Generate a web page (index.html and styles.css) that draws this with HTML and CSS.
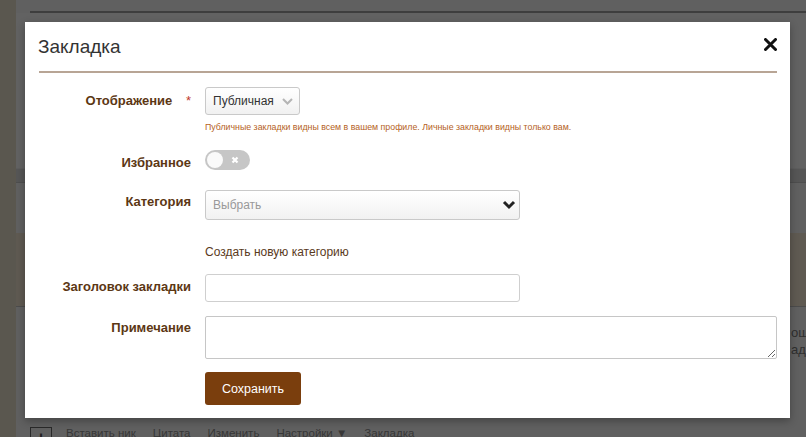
FILE: index.html
```html
<!DOCTYPE html>
<html lang="ru">
<head>
  <meta charset="UTF-8">
  <meta name="viewport" content="width=device-width, initial-scale=1.0">
  <title>Закладка</title>
  <link rel="stylesheet" href="styles.css">
</head>
<body>

  <!-- Page behind the dialog -->
  <div class="page">
    <aside class="side"></aside>
    <main class="content">
      <div class="top-line"></div>
      <div class="filler"></div>
      <div class="band"></div>
      <div class="gap"></div>
      <div class="post-head"></div>
      <div class="post-body">ош<br>ад</div>
      <div class="toolbar">
        <span class="plus">+</span>
        <span>Вставить ник</span>
        <span>Цитата</span>
        <span>Изменить</span>
        <span>Настройки ▼</span>
        <span>Закладка</span>
      </div>
    </main>
  </div>

  <div class="overlay"></div>

  <!-- Bookmark dialog -->
  <div class="modal">
    <div class="modal-header">
      <h2 class="modal-title">Закладка</h2>
      <button class="close-btn" aria-label="Закрыть">
        <svg width="13" height="13" viewBox="0 0 13 13"><path d="M1.5 1.5 L11.5 11.5 M11.5 1.5 L1.5 11.5" stroke="#111" stroke-width="3" stroke-linecap="round"/></svg>
      </button>
    </div>

    <form class="form">
      <div class="row row-privacy">
        <label class="label">Отображение <span class="req">*</span></label>
        <div class="control">
          <div class="select small">
            <span>Публичная</span>
            <svg width="11" height="7" viewBox="0 0 11 7"><path d="M1 1 L5.5 5.5 L10 1" fill="none" stroke="#b5b5b5" stroke-width="2"/></svg>
          </div>
          <p class="hint">Публичные закладки видны всем в вашем профиле. Личные закладки видны только вам.</p>
        </div>
      </div>

      <div class="row row-fav">
        <label class="label">Избранное</label>
        <div class="control">
          <div class="toggle">
            <span class="knob"></span>
            <svg class="toggle-x" width="8" height="8" viewBox="0 0 8 8"><path d="M1.5 1.5 L6.5 6.5 M6.5 1.5 L1.5 6.5" stroke="#fff" stroke-width="2.2"/></svg>
          </div>
        </div>
      </div>

      <div class="row row-cat">
        <label class="label">Категория</label>
        <div class="control">
          <div class="select wide">
            <span class="placeholder">Выбрать</span>
            <svg width="14" height="10" viewBox="0 0 14 10"><path d="M2 2 L7 7 L12 2" fill="none" stroke="#222" stroke-width="3"/></svg>
          </div>
        </div>
      </div>

      <div class="row row-link">
        <span></span>
        <a class="new-cat" href="#">Создать новую категорию</a>
      </div>

      <div class="row row-title">
        <label class="label">Заголовок закладки</label>
        <div class="control">
          <input type="text" class="text-input">
        </div>
      </div>

      <div class="row row-note">
        <label class="label">Примечание</label>
        <div class="control">
          <textarea class="note"></textarea>
        </div>
      </div>

      <div class="row row-submit">
        <span></span>
        <div class="control">
          <button type="button" class="save-btn">Сохранить</button>
        </div>
      </div>
    </form>
  </div>

</body>
</html>
```

FILE: styles.css
```css
body {
  margin: 0;
  width: 806px;
  height: 437px;
  overflow: hidden;
  font-family: "Liberation Sans", Arial, sans-serif;
  position: relative;
}

/* page behind */
.page {
  display: flex;
  height: 437px;
  background-color: #f0f0f0;
}

.side {
  flex-shrink: 0;
  width: 16px;
  background-color: #e1d9c5;
}

.content {
  flex: 1;
  min-width: 0;
  padding-top: 11px;
}

.top-line {
  height: 2px;
  margin-left: 14px;
  background-color: #9b9b9b;
}

.filler {
  height: 155px;
  background-color: #f5f5f5;
}

.band {
  height: 13px;
  background-color: #d8d8d8;
  border-top: 1px solid #e8e8e8;
  border-bottom: 1px solid #c4c4c4;
}

.gap {
  height: 50px;
}

.post-head {
  height: 73px;
  background-color: #ede1cd;
  border-bottom: 1px solid #bdbdbd;
}

.post-body {
  height: 100px;
  padding: 17px 0 0 775px;
  font-size: 13px;
  line-height: 17px;
  color: #777;
  white-space: nowrap;
}

.toolbar {
  display: flex;
  align-items: flex-start;
  gap: 17px;
  padding: 3px 0 0 14px;
  font-size: 11.5px;
  color: #8a8a8a;
}

.toolbar .plus {
  width: 20px;
  height: 20px;
  margin-right: -3px;
  border: 1px solid #666;
  text-align: center;
  font-weight: bold;
  font-size: 18px;
  line-height: 20px;
  color: #555;
}

.overlay {
  position: absolute;
  inset: 0;
  background-color: rgba(0, 0, 0, 0.6);
}

/* dialog */
.modal {
  position: absolute;
  left: 25px;
  top: 22px;
  width: 765px;
  height: 396px;
  background-color: #fff;
  box-shadow: 0 3px 8px rgba(0, 0, 0, 0.3);
}

.modal-header {
  display: flex;
  align-items: center;
  justify-content: space-between;
  height: 49px;
  margin: 0 13px 0 14px;
  border-bottom: 2px solid #b8a595;
}

.modal-title {
  margin: 0 0 0 -1px;
  font-size: 19px;
  font-weight: normal;
  color: #333;
}

.close-btn {
  border: none;
  background: none;
  padding: 0;
  margin-bottom: 4px;
  display: flex;
  cursor: pointer;
}

.form {
  padding: 14px 14px 0 0;
}

.row {
  display: grid;
  grid-template-columns: 166px 1fr;
  column-gap: 14px;
}

.label {
  text-align: right;
  font-size: 13px;
  font-weight: bold;
  line-height: 16px;
  padding-top: 5px;
  color: #5c3714;
  white-space: nowrap;
}

.req {
  color: #c0392b;
  font-weight: normal;
  margin-left: 10px;
}

.row-privacy .label {
  padding-top: 6px;
}

.row-fav {
  margin-top: 17px;
}

.row-cat {
  margin-top: 19px;
}

.row-cat .label {
  padding-top: 4px;
}

.row-link {
  margin-top: 24px;
}

.row-title {
  margin-top: 14px;
}

.row-note {
  margin-top: 14px;
}

.row-note .label {
  padding-top: 4px;
}

.row-submit {
  margin-top: 13px;
}

.select {
  display: flex;
  align-items: center;
  justify-content: space-between;
  box-sizing: border-box;
  border: 1px solid #c9c9c9;
  border-radius: 3px;
  background: linear-gradient(#ffffff, #f1f1f1);
  padding: 0 6px 0 7px;
}

.select.small {
  width: 95px;
  height: 28px;
  font-size: 12px;
  color: #333;
}

.select.wide {
  width: 315px;
  height: 30px;
  padding-right: 3px;
}

.placeholder {
  font-size: 12px;
  color: #999;
}

.hint {
  margin: 6px 0 0;
  font-size: 8.8px;
  line-height: 12px;
  color: #b55f1e;
  white-space: nowrap;
}

.toggle {
  position: relative;
  width: 45px;
  height: 20px;
  border-radius: 10px;
  background-color: #c6c6c6;
}

.knob {
  position: absolute;
  left: 2px;
  top: 2px;
  width: 16px;
  height: 16px;
  border-radius: 50%;
  background-color: #fafafa;
}

.toggle-x {
  position: absolute;
  left: 26px;
  top: 6px;
}

.new-cat {
  font-size: 12px;
  line-height: 16px;
  color: #5a3a1c;
  text-decoration: none;
}

.text-input {
  box-sizing: border-box;
  width: 315px;
  height: 28px;
  border: 1px solid #cfcfcf;
  border-radius: 3px;
  margin: 0;
}

.note {
  display: block;
  box-sizing: border-box;
  width: 572px;
  height: 43px;
  margin: 0;
  border: 1px solid #c6c6c6;
  border-radius: 2px;
  resize: both;
}

.save-btn {
  width: 96px;
  height: 33px;
  border: none;
  border-radius: 3px;
  background-color: #7a3e0d;
  color: #fff;
  font-size: 12.5px;
  cursor: pointer;
}
```
